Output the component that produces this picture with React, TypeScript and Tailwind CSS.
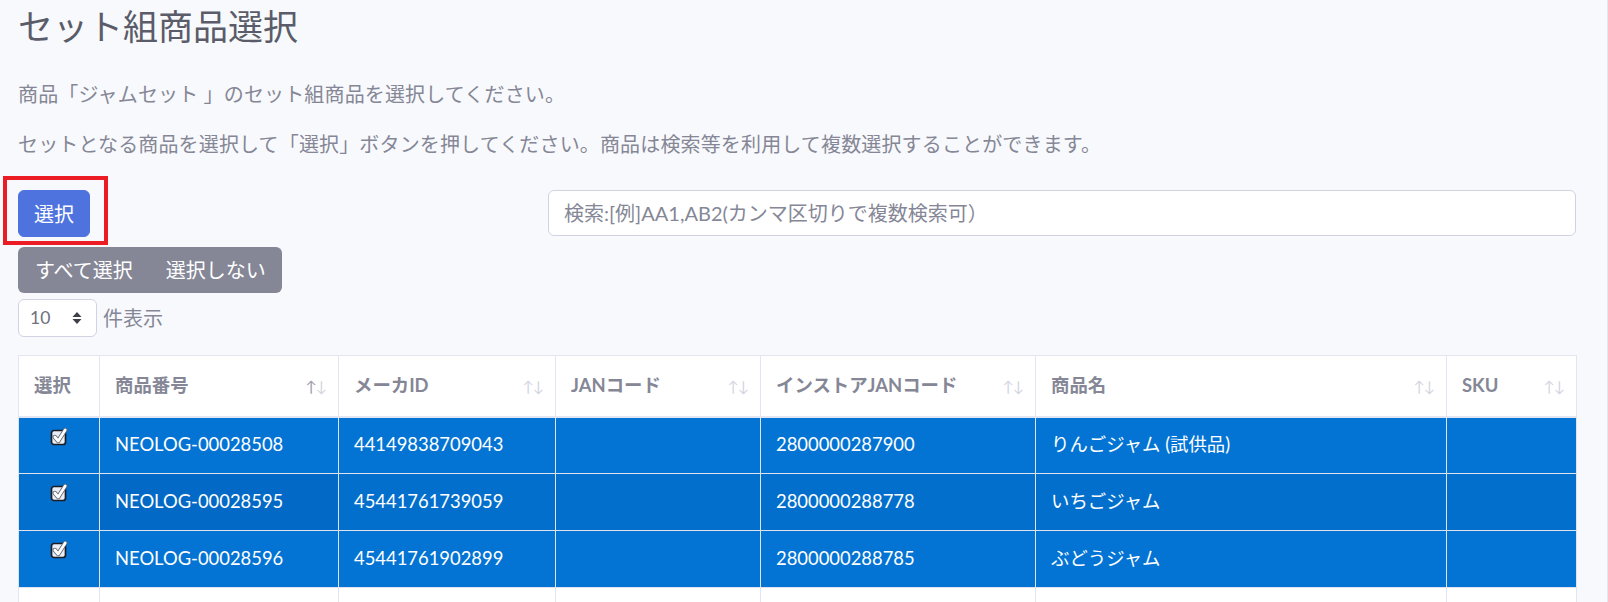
import type { ReactNode } from 'react';

type Row = { code: string; maker: string; jan: string; storeJan: string; name: string; sku: string };

const ROWS: Row[] = [
  { code: 'NEOLOG-00028508', maker: '44149838709043', jan: '', storeJan: '2800000287900', name: 'りんごジャム (試供品)', sku: '' },
  { code: 'NEOLOG-00028595', maker: '45441761739059', jan: '', storeJan: '2800000288778', name: 'いちごジャム', sku: '' },
  { code: 'NEOLOG-00028596', maker: '45441761902899', jan: '', storeJan: '2800000288785', name: 'ぶどうジャム', sku: '' },
];

const COLUMNS = [
  { label: '商品番号', width: 'w-[239px]', active: true },
  { label: 'メーカID', width: 'w-[217px]', active: false },
  { label: 'JANコード', width: 'w-[205px]', active: false },
  { label: 'インストアJANコード', width: 'w-[275px]', active: false },
  { label: '商品名', width: 'w-[411px]', active: false },
  { label: 'SKU', width: 'w-[130px]', active: false },
];

function CheckedBox() {
  return (
    <svg width="19" height="19" viewBox="0 0 19 19" className="mx-auto block">
      <rect x="1.5" y="3.5" width="14" height="14" rx="2.5" fill="#e9eef6" stroke="#1b1d24" strokeWidth="1.7" />
      <path d="M4.8 10 L8.2 14 L15.2 3" fill="none" stroke="#5b6270" strokeWidth="4.4" strokeLinecap="round" strokeLinejoin="round" />
      <path d="M4.8 10 L8.2 14 L15.2 3" fill="none" stroke="#ffffff" strokeWidth="2.8" strokeLinecap="round" strokeLinejoin="round" />
    </svg>
  );
}

function SortIcons({ active }: { active: boolean }) {
  return (
    <span className="absolute right-[12px] top-1/2 -translate-y-1/2 text-[15px] font-normal leading-none tracking-[-1px]">
      <span className={active ? 'text-[#9a9cab]' : 'text-[#d3d5df]'}>↑</span>
      <span className="text-[#d3d5df]">↓</span>
    </span>
  );
}

function Cell({ children, className = '' }: { children?: ReactNode; className?: string }) {
  return (
    <td className={`h-[57px] border border-[#dfe3ee] px-[15px] text-[18.4px] text-white ${className}`}>
      {children}
    </td>
  );
}

export default function App() {
  return (
    <div
      className="h-[602px] overflow-hidden border-r border-[#e3e6f0] bg-[#f8f9fc] pl-[18px] pr-[31px]"
      style={{ fontFamily: 'Lato, "Noto Sans CJK JP", "Noto Sans", sans-serif' }}
    >
      <h3 className="pt-[5px] text-[35px] leading-[42px] font-normal text-[#5a5c69]">セット組商品選択</h3>

      <div className="mt-[32px] text-[20px] leading-[30px] tracking-[0.15px] text-[#858796]">
        <p className="mb-[20px]">商品「ジャムセット 」のセット組商品を選択してください。</p>
        <p>セットとなる商品を選択して「選択」ボタンを押してください。商品は検索等を利用して複数選択することができます。</p>
      </div>

      <div className="mt-[31px] flex items-start justify-between">
        <div className="relative">
          <button className="h-[47px] rounded-[6px] border border-[#4e73df] bg-[#4e73df] px-[15px] text-[20px] leading-[30px] text-white">
            選択
          </button>
          <div className="pointer-events-none absolute -left-[15px] -top-[14px] h-[69px] w-[105px] border-[4px] border-[#ec1c24]" />
        </div>
        <input
          className="h-[46px] w-[1028px] rounded-[6px] border border-[#d1d3e2] bg-white px-[15px] text-[20px] text-[#6e707e] outline-none placeholder:text-[#858796]"
          placeholder="検索:[例]AA1,AB2(カンマ区切りで複数検索可）"
        />
      </div>

      <div className="mt-[10px] flex">
        <div className="flex h-[46px] overflow-hidden rounded-[6px] bg-[#858796] text-[20px] text-white">
          <button className="px-[17px]">すべて選択</button>
          <button className="px-[16px]">選択しない</button>
        </div>
      </div>

      <div className="mt-[6px] flex items-center gap-[6px]">
        <div className="relative flex h-[38px] w-[79px] items-center rounded-[6px] border border-[#d1d3e2] bg-white pl-[11px] text-[17.5px] text-[#6e707e]">
          10
          <svg className="absolute right-[14px] top-1/2 -translate-y-1/2" width="10" height="14" viewBox="0 0 10 14">
            <path d="M5 1 L9.5 6 H0.5 Z" fill="#3d3f4a" />
            <path d="M5 13 L9.5 8 H0.5 Z" fill="#3d3f4a" />
          </svg>
        </div>
        <span className="text-[20px] text-[#858796]">件表示</span>
      </div>

      <table className="mt-[18px] w-[1558px] table-fixed border-collapse">
        <thead>
          <tr className="bg-white">
            <th className="relative h-[61px] w-[81px] border border-b-2 border-[#e3e6f0] px-[15px] text-left text-[18.4px] font-bold text-[#858796]">
              選択
            </th>
            {COLUMNS.map((c) => (
              <th
                key={c.label}
                className={`relative h-[61px] ${c.width} border border-b-2 border-[#e3e6f0] px-[15px] text-left text-[18.4px] font-bold text-[#858796]`}
              >
                {c.label}
                <SortIcons active={c.active} />
              </th>
            ))}
          </tr>
        </thead>
        <tbody>
          {ROWS.map((r, i) => {
            const bg = i % 2 === 1 ? 'bg-[#036fcd]' : 'bg-[#0374d4]';
            return (
              <tr key={r.code} className={bg}>
                <Cell className="pt-[9px] align-top">
                  <CheckedBox />
                </Cell>
                <Cell className={`align-middle ${i % 2 === 1 ? 'bg-[#0369c6]' : ''}`}>{r.code}</Cell>
                <Cell className="align-middle">{r.maker}</Cell>
                <Cell className="align-middle">{r.jan}</Cell>
                <Cell className="align-middle">{r.storeJan}</Cell>
                <Cell className="align-middle">{r.name}</Cell>
                <Cell className="align-middle">{r.sku}</Cell>
              </tr>
            );
          })}
          <tr className="bg-white">
            {Array.from({ length: 7 }).map((_, i) => (
              <td key={i} className="h-[57px] border border-[#e3e6f0]" />
            ))}
          </tr>
        </tbody>
      </table>
    </div>
  );
}
